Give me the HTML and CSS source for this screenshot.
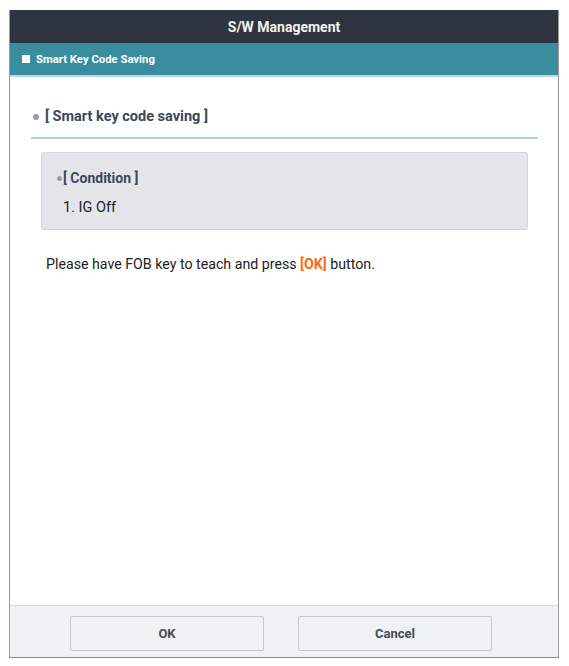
FILE: index.html
```html
<!DOCTYPE html>
<html>
<head>
    <link rel="stylesheet" href="styles.css">
</head>
<body>
    <div class="dialog">
        <div class="dialog-title">S/W Management</div>
        <div class="sub-title"><span class="square"></span>Smart Key Code Saving</div>
        <div class="dialog-body">
            <div class="section-head"><span class="dot"></span>[ Smart key code saving ]</div>
            <div class="condition-box">
                <div class="condition-head"><span class="dot small"></span>[ Condition ]</div>
                <div class="condition-item">1. IG Off</div>
            </div>
            <p class="message">Please have FOB key to teach and press <span class="hl">[OK]</span> button.</p>
        </div>
        <div class="dialog-footer">
            <button class="btn">OK</button>
            <button class="btn">Cancel</button>
        </div>
    </div>
</body>
</html>
```

FILE: styles.css
```css
body {
    margin: 0;
    background-color: #FFFFFF;
    font-family: Roboto, "Liberation Sans", Arial, sans-serif;
}
.dialog {
    margin: 10px 0 0 9px;
    width: 550px;
    height: 648px;
    border-left: 1px solid #9a9a9a;
    border-right: 1px solid #9a9a9a;
    border-bottom: 1px solid #8a8a8a;
    display: flex;
    flex-direction: column;
    box-sizing: border-box;
}
.dialog-title {
    height: 33px;
    background-color: #2e3440;
    color: #F2F2F2;
    font-size: 14px;
    font-weight: bold;
    display: flex;
    align-items: center;
    justify-content: center;
}
.sub-title {
    height: 32px;
    background-color: #3a8d9e;
    border-bottom: 2px solid #bcd9df;
    color: #FFFFFF;
    font-size: 11.3px;
    font-weight: bold;
    display: flex;
    align-items: center;
    padding-left: 12px;
}
.square {
    width: 8px;
    height: 8px;
    background-color: #FFFFFF;
    margin-right: 6px;
}
.dialog-body {
    flex: 1;
    padding: 31px 20px 0 21px;
}
.section-head {
    display: flex;
    align-items: center;
    color: #3b475a;
    font-size: 14.5px;
    font-weight: bold;
    padding-bottom: 12px;
    border-bottom: 2px solid #a9d4db;
}
.dot {
    width: 6px;
    height: 6px;
    border-radius: 50%;
    background-color: #9a9ea4;
    margin: 0 6px 0 2px;
}
.dot.small {
    width: 5px;
    height: 5px;
    margin: 0 1px 0 0;
}
.condition-box {
    margin: 13px 10px 0 10px;
    height: 78px;
    box-sizing: border-box;
    background-color: #e4e5e9;
    border: 1px solid #d4d5da;
    border-radius: 3px;
    padding: 17px 0 0 15px;
}
.condition-head {
    display: flex;
    align-items: center;
    color: #3b475a;
    font-size: 14px;
    font-weight: bold;
}
.condition-item {
    margin: 13px 0 0 6px;
    font-size: 14.5px;
    color: #222;
}
.message {
    margin: 26px 0 0 15px;
    font-size: 14.2px;
    color: #222;
}
.hl {
    color: #ff6a13;
    font-weight: bold;
}
.dialog-footer {
    height: 52px;
    background-color: #f0f1f3;
    border-top: 1px solid #dcdcdc;
    display: flex;
    justify-content: center;
    gap: 34px;
    padding: 10px 6px 0 0;
    box-sizing: border-box;
}
.btn {
    width: 194px;
    height: 35px;
    background-color: #f0f1f3;
    border: 1px solid #c6c7ca;
    border-radius: 2px;
    font-family: Roboto, "Liberation Sans", Arial, sans-serif;
    font-size: 13px;
    font-weight: bold;
    color: #454a55;
}
```
